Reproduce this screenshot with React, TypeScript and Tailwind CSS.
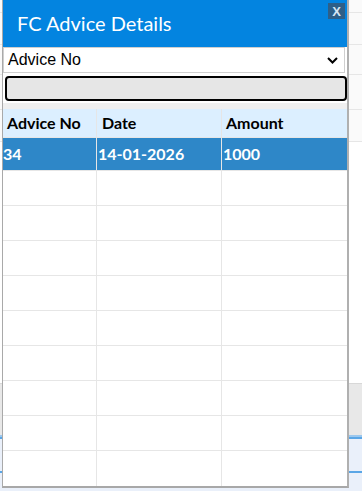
import React from "react";

const rows = Array.from({ length: 9 });

export default function App() {
  return (
    <div className="relative w-[362px] h-[491px] overflow-hidden bg-white" style={{ fontFamily: "Lato, 'Liberation Sans', sans-serif" }}>
      {/* background page */}
      <div className="absolute inset-0 flex flex-col">
        <div className="h-[383px] bg-[#fafafa] flex flex-col">
          <div className="h-[12px]" />
          <div className="h-[32px] border-t border-[#e6e6e6]" />
          <div className="h-[30px] border-t border-[#e6e6e6]" />
          <div className="h-[35px] border-t border-[#e6e6e6]" />
          <div className="h-[32px] border-t border-[#e6e6e6]" />
          <div className="flex-1 border-t border-[#e6e6e6] bg-white" />
        </div>
        <div className="h-[52px] bg-[#e8e8e8] border-t border-[#d8d8d8]" />
        <div className="h-[2px] bg-[#9cc8ee]" />
        <div className="h-[34px] bg-[#eaf0fa] border-t-2 border-[#5aa6e6]" />
        <div className="flex-1 bg-[#eaf0fa] border-t-2 border-[#5aa6e6]" />
      </div>

      {/* modal */}
      <div className="absolute left-[2px] top-0 w-[347px] h-[488px] bg-white border-l border-[#a9a9a9] border-r-2 border-r-[#b0b0b0] border-b-2 border-b-[#a8a8a8] flex flex-col">
        <div className="h-[47px] bg-[#0384e0] relative flex items-center pl-[14px]">
          <span className="text-white text-[20px] leading-none mt-[-2px]">FC Advice Details</span>
          <div className="absolute right-[2px] top-[3px] w-[17px] h-[16px] bg-[#2e5f88] flex items-center justify-center">
            <span className="text-[#d6e6f4] text-[13px] font-bold leading-none" style={{ fontFamily: "'Liberation Sans', sans-serif" }}>X</span>
          </div>
        </div>
        <div className="h-[26px] mr-[2px] border border-[#cfcfcf] bg-white flex items-center justify-between pl-[4px] pr-[6px]">
          <span className="text-[16px] text-black leading-none" style={{ fontFamily: "'Liberation Sans', Arial, sans-serif" }}>Advice No</span>
          <svg width="11" height="7" viewBox="0 0 11 7" fill="none">
            <path d="M1 1 L5.5 5.5 L10 1" stroke="#000" strokeWidth="2" />
          </svg>
        </div>
        <div className="pt-[3px] pb-[2px] pl-[2px] bg-white">
          <div className="h-[25px] bg-[#e6e6e6] border-2 border-black rounded-[4px]" />
        </div>
        <div className="h-[6px] bg-[#efefef]" />
        <div className="flex-1 flex flex-col">
          <div className="h-[29px] bg-[#dcefff] grid grid-cols-[94px_125px_1fr] text-[16px] font-bold text-black border-b border-[#e6e6e6]">
            <div className="flex items-center pl-[4px] border-r border-[#e6e6e6]">Advice No</div>
            <div className="flex items-center pl-[5px] border-r border-[#e6e6e6]">Date</div>
            <div className="flex items-center pl-[4px]">Amount</div>
          </div>
          <div className="h-[33px] bg-[#2e87c8] grid grid-cols-[94px_125px_1fr] text-[16px] font-bold text-white border-b border-[#e6e6e6]">
            <div className="flex items-center border-r border-[#e6e6e6]">34</div>
            <div className="flex items-center pl-[1px] border-r border-[#e6e6e6]">14-01-2026</div>
            <div className="flex items-center pl-[1px]">1000</div>
          </div>
          {rows.map((_, i) => (
            <div key={i} className="h-[35px] grid grid-cols-[94px_125px_1fr] border-b border-[#e6e6e6] last:border-b-0">
              <div className="border-r border-[#e6e6e6]" />
              <div className="border-r border-[#e6e6e6]" />
              <div />
            </div>
          ))}
        </div>
      </div>
    </div>
  );
}
